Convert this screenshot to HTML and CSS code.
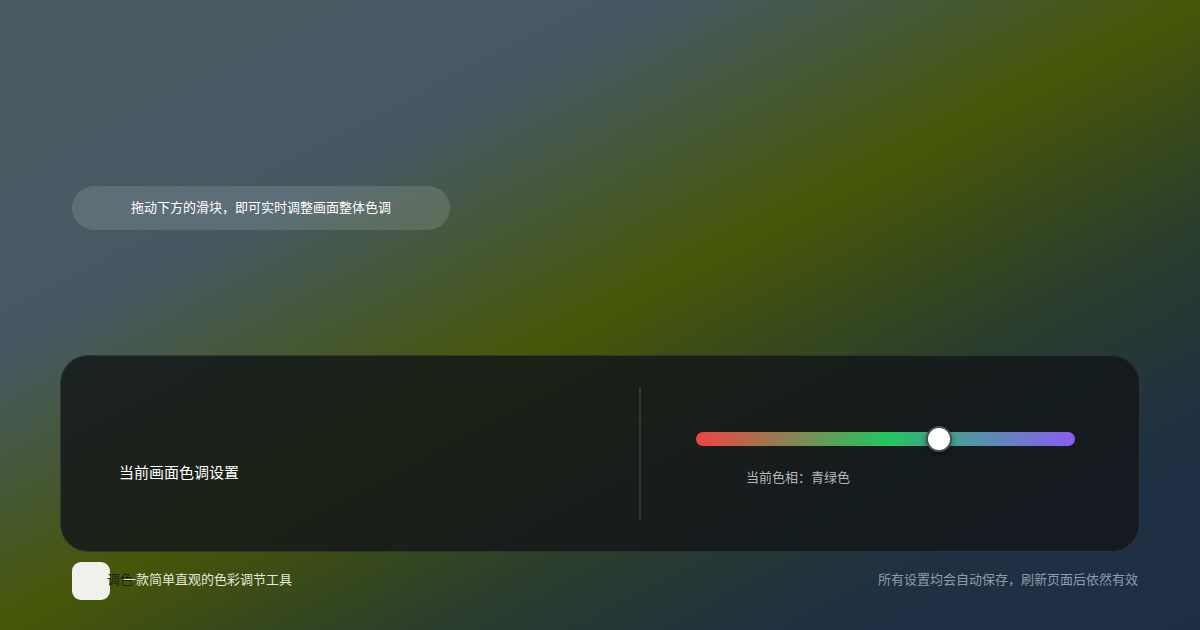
FILE: index.html
```html
<!DOCTYPE html>
<html lang="zh-CN">
<head>
    <meta charset="UTF-8">
    <meta name="viewport" content="width=device-width, initial-scale=1.0">
    <title>调色</title>
    <link rel="stylesheet" href="styles.css">
</head>
<body>
<div class="page">
    <div class="hint">拖动下方的滑块，即可实时调整画面整体色调</div>

    <div class="panel">
        <div class="panel-left">
            <div class="panel-label">当前画面色调设置</div>
        </div>
        <div class="panel-divider"></div>
        <div class="panel-right">
            <div class="slider">
                <div class="slider-track"></div>
                <div class="slider-thumb" style="left: 64.2%;"></div>
            </div>
            <div class="slider-value">当前色相：青绿色</div>
        </div>
    </div>

    <div class="footer">
        <div class="brand">
            <div class="brand-tile"></div>
            <span class="brand-name">调色</span>
            <span class="brand-caption">一款简单直观的色彩调节工具</span>
        </div>
        <div class="footer-note">所有设置均会自动保存，刷新页面后依然有效</div>
    </div>
</div>
</body>
</html>
```

FILE: styles.css
```css
* {
    box-sizing: border-box;
    margin: 0;
    padding: 0;
}

body, html {
    height: 100%;
    overflow: hidden;
    font-family: "DejaVu Sans", "Noto Sans CJK SC", sans-serif;
    font-size: 13px;
}

body {
    background: linear-gradient(to bottom right, #4a5a62 0%, #465963 28%, #465708 50%, #2b3d2c 68%, #1f3043 84%, #1e2f45 100%);
}

.page {
    display: flex;
    flex-direction: column;
    height: 100%;
    padding: 186px 60px 30px;
}

.hint {
    align-self: flex-start;
    margin-left: 12px;
    height: 44px;
    padding: 0 59px 4px;
    display: flex;
    align-items: center;
    border-radius: 22px;
    background-color: rgba(255, 255, 255, 0.13);
    color: #fff;
}

.panel {
    margin-top: auto;
    height: 197px;
    display: flex;
    padding: 31px 64px 31px 58px;
    border-radius: 28px;
    background-color: rgba(18, 22, 24, 0.82);
    border: 1px solid rgba(255, 255, 255, 0.1);
}

.panel-left {
    width: 520px;
    display: flex;
    align-items: center;
    padding-top: 36px;
}

.panel-label {
    color: #fff;
    font-size: 15px;
}

.panel-divider {
    width: 2px;
    background-color: rgba(255, 255, 255, 0.1);
}

.panel-right {
    flex: 1;
    display: flex;
    flex-direction: column;
    justify-content: center;
    padding-left: 55px;
    padding-top: 10px;
}

.slider {
    position: relative;
    height: 14px;
}

.slider-track {
    height: 100%;
    border-radius: 7px;
    background: linear-gradient(90deg, #ef4444, #22c55e, #8b5cf6);
}

.slider-thumb {
    position: absolute;
    top: 50%;
    width: 26px;
    height: 26px;
    margin: -13px 0 0 -13px;
    border-radius: 50%;
    background-color: #fff;
    border: 2px solid #4b4f55;
    box-shadow: 0 2px 6px rgba(0, 0, 0, 0.4);
}

.slider-value {
    margin: 21px 0 0 50px;
    color: #b4b8bc;
}

.footer {
    display: flex;
    align-items: center;
    justify-content: space-between;
    margin-top: 10px;
    padding: 0 2px 0 12px;
    height: 38px;
}

.brand {
    display: flex;
    align-items: center;
}

.brand-tile {
    width: 38px;
    height: 38px;
    border-radius: 9px;
    background-color: #f0f0ec;
}

.brand-name {
    width: 16px;
    margin: 0 0 5px -3px;
    white-space: nowrap;
    color: #1c1f14;
}

.brand-caption {
    margin-bottom: 5px;
    color: #e4e8d8;
}

.footer-note {
    margin-bottom: 5px;
    color: #8d9bab;
}
```
